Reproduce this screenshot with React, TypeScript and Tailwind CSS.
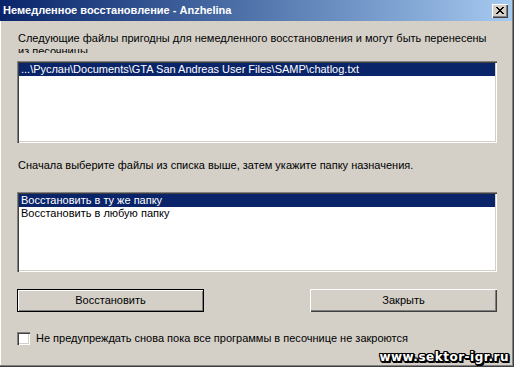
const sunken =
  'shadow-[inset_1px_1px_#808080,inset_2px_2px_#404040,inset_-1px_-1px_#ffffff,inset_-2px_-2px_#d4d0c8]';

const App = () => {
  return (
    <div className="w-[514px] h-[367px] bg-[#d4d0c8] relative overflow-hidden flex flex-col text-[11px] leading-[13px] text-black font-['Liberation_Sans',Arial,sans-serif] shadow-[inset_-1px_-1px_#404040,inset_-2px_-2px_#808080,inset_1px_0_#ffffff]">
      {/* title bar */}
      <div className="h-[21px] mr-[2px] flex items-center justify-between pl-[3px] pr-[4px] bg-gradient-to-r from-[#0a246a] to-[#a6caf0]">
        <span className="text-white font-bold text-[11px] leading-[13px]">Немедленное восстановление - Anzhelina</span>
        <button className="w-[16px] h-[14px] bg-[#d4d0c8] flex items-center justify-center shadow-[inset_1px_1px_#ffffff,inset_-1px_-1px_#404040,inset_-2px_-2px_#808080]">
          <svg width="8" height="7" viewBox="0 0 8 7" shapeRendering="crispEdges" className="-mt-px">
            <path
              d="M0 0h2v1H0zM6 0h2v1H6zM1 1h2v1H1zM5 1h2v1H5zM2 2h4v1H2zM3 3h2v1H3zM2 4h4v1H2zM1 5h2v1H1zM5 5h2v1H5zM0 6h2v1H0zM6 6h2v1H6z"
              fill="#000"
            />
          </svg>
        </button>
      </div>

      <div className="flex flex-col px-[17px]">
        <p className="mt-[11px] h-[21px] overflow-hidden pl-px">
          Следующие файлы пригодны для немедленного восстановления и могут быть перенесены из песочницы.
        </p>

        <div className={`mt-[8px] h-[82px] bg-white p-[2px] ${sunken}`}>
          <div className="h-[13px] bg-[#0a246a] text-white pl-[2px] whitespace-nowrap">
            ...\Руслан\Documents\GTA San Andreas User Files\SAMP\chatlog.txt
          </div>
        </div>

        <p className="mt-[16px] pl-px">Сначала выберите файлы из списка выше, затем укажите папку назначения.</p>

        <div className={`mt-[20px] h-[80px] bg-white p-[2px] ${sunken}`}>
          <div className="h-[13px] bg-[#0a246a] text-white pl-[2px]">Восстановить в ту же папку</div>
          <div className="h-[13px] pl-[2px]">Восстановить в любую папку</div>
        </div>

        <div className="mt-[17px] flex justify-between">
          <button className="w-[187px] h-[23px] border border-black bg-[#d4d0c8] shadow-[inset_1px_1px_#ffffff,inset_-1px_-1px_#808080]">
            Восстановить
          </button>
          <button className="w-[187px] h-[23px] bg-[#d4d0c8] shadow-[inset_1px_1px_#ffffff,inset_-1px_-1px_#404040,inset_-2px_-2px_#808080]">
            Закрыть
          </button>
        </div>

        <label className="mt-[20px] flex items-center gap-[6px]">
          <span className={`w-[13px] h-[13px] bg-white ${sunken}`} />
          <span>Не предупреждать снова пока все программы в песочнице не закроются</span>
        </label>
      </div>

      <div className="absolute right-[5px] bottom-[3px] text-white font-bold text-[12px] leading-[13px] tracking-[0.5px] font-['DejaVu_Sans',sans-serif] [text-shadow:1px_0_0_#000,-1px_0_0_#000,0_1px_0_#000,0_-1px_0_#000,1px_1px_0_#000,-1px_-1px_0_#000,1px_-1px_0_#000,-1px_1px_0_#000,2px_2px_0_#000,2px_0_0_#000,0_2px_0_#000]">
        www.sektor-igr.ru
      </div>
    </div>
  );
};

export default App;
